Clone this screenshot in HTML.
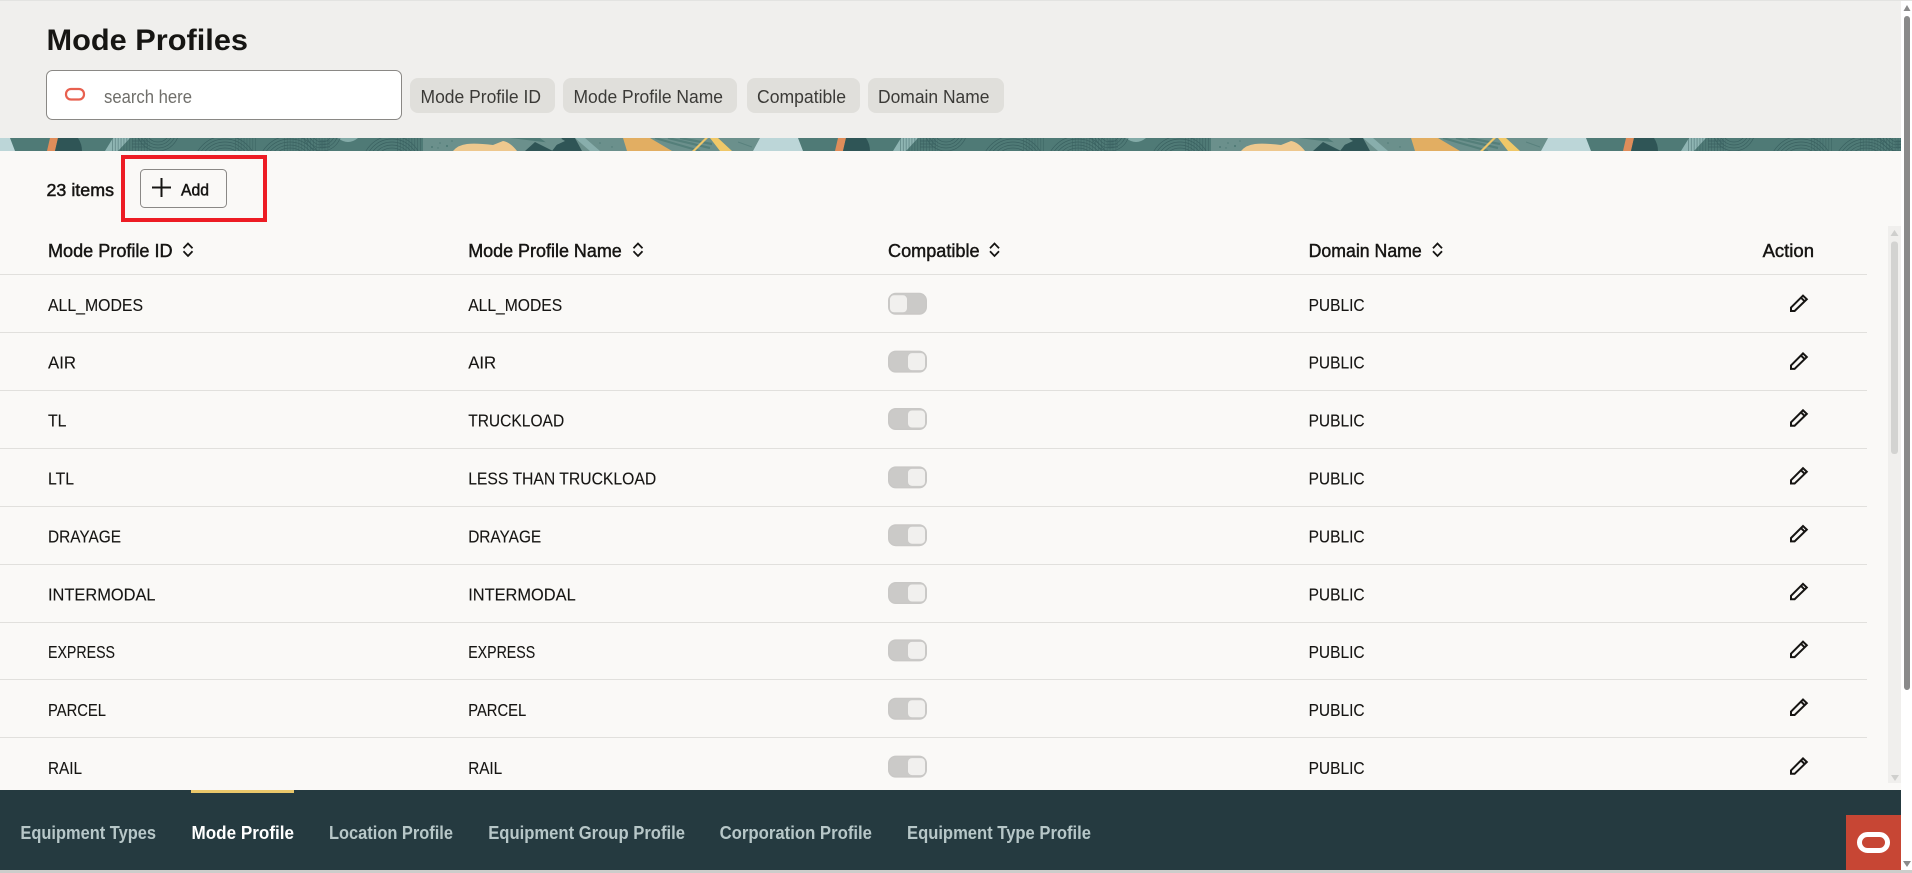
<!DOCTYPE html>
<html lang="en">
<head>
<meta charset="utf-8">
<title>Mode Profiles</title>
<style>
html,body{margin:0;padding:0;width:1912px;height:873px;overflow:hidden;background:#fff}
svg{display:block;position:absolute;left:0;top:0}
text{font-family:"Liberation Sans",sans-serif;white-space:pre}
.th{font-size:18px;fill:#161513;stroke:#161513;stroke-width:.45px}
.td{font-size:17.5px;fill:#161513;stroke:#161513;stroke-width:.12px}
.chip{font-size:18px;fill:#3b3a37}
.tab{font-size:18px;font-weight:700;fill:#b7c7c8}
</style>
</head>
<body>
<svg width="1912" height="873" viewBox="0 0 1912 873" xmlns="http://www.w3.org/2000/svg">
<defs>
<pattern id="bp" x="0" y="138" width="788" height="13" patternUnits="userSpaceOnUse">
  <rect width="788" height="13" fill="#4f7a76"/>
  <rect x="423" width="337" height="13" fill="#6b908c"/>
  <path d="M-28 0H10L15 13H-35ZM760 0H797L800 13H753Z" fill="#bcd6d8"/>
  <path d="M50 0H58L55 13H47Z" fill="#e08d5a"/>
  <path d="M58 0H78Q82 6 82 13H55Z" fill="#2f5556"/>
  <path d="M105 13L113 0H130L118 13Z" fill="#8fb5b3"/>
  <path d="M338 0Q348 8 358 0Z" fill="#84aba8"/>
  <g fill="none" stroke="#2f5556" stroke-width=".7" opacity=".7">
    <path d="M112 6.5H150" stroke-width="13" stroke-dasharray=".7 2.2" opacity=".8"/>
    <path d="M132 3H148M132 6H148M132 9H148"/>
    <circle cx="158" cy="-8" r="12"/><circle cx="158" cy="-8" r="15"/><circle cx="158" cy="-8" r="18"/><circle cx="158" cy="-8" r="21"/>
    <circle cx="225" cy="30" r="20"/><circle cx="225" cy="30" r="23"/><circle cx="225" cy="30" r="26"/><circle cx="225" cy="30" r="29"/><circle cx="225" cy="30" r="32"/>
    <path d="M235 6.5H258" stroke-width="13" stroke-dasharray=".7 2.2" opacity=".7"/>
    <circle cx="290" cy="30" r="20"/><circle cx="290" cy="30" r="23"/><circle cx="290" cy="30" r="26"/><circle cx="290" cy="30" r="29"/><circle cx="290" cy="30" r="32"/>
    <path d="M284 6.5H330" stroke-width="13" stroke-dasharray=".7 2.2" opacity=".7"/>
    <path d="M320 3H330M320 6H330M320 9H330"/>
    <circle cx="322" cy="-6" r="10"/><circle cx="322" cy="-6" r="13"/><circle cx="322" cy="-6" r="16"/><circle cx="322" cy="-6" r="19"/>
    <circle cx="392" cy="28" r="18"/><circle cx="392" cy="28" r="21"/><circle cx="392" cy="28" r="24"/><circle cx="392" cy="28" r="27"/><circle cx="392" cy="28" r="30"/>
    <path d="M397 6.5H423" stroke-width="13" stroke-dasharray=".7 2.2" opacity=".8"/>
  </g>
  <g fill="#4f7a76">
    <circle cx="432" cy="9" r="1"/><circle cx="440" cy="5" r=".8"/><circle cx="447" cy="8" r="1.1"/><circle cx="438" cy="10" r=".7"/><circle cx="452" cy="3" r=".8"/><circle cx="586" cy="8" r=".8"/><circle cx="600" cy="5" r=".8"/><circle cx="612" cy="9" r=".7"/>
    <path d="M510 0H560L552 5L535 3Z"/>
  </g>
  <path d="M453 13Q458 7 467 6T493 7L503 3Q510 4 517 13Z" fill="#eec88e"/>
  <path d="M525 13L535 4L553 13Z" fill="#2f5556"/>
  <path d="M562 0H575L582 13H552Z" fill="#2f5556"/>
  <path d="M575 0H585L600 13H590Z" fill="#88aeac"/>
  <path d="M540 0H560L565 3L552 9Z" fill="#6b908c"/>
  <path d="M623 0H650L672 13H627Z" fill="#e2ae62"/>
  <path d="M655 0L700 13M668 0L710 10M680 0L712 6" stroke="#4f7a76" stroke-width="2.2" fill="none" opacity=".8"/>
  <path d="M705 0H708L695 13H692Z" fill="#eec66a"/>
  <path d="M710 0H718L732 13H720Z" fill="#f0c868"/>
  <path d="M738 4L752 9" stroke="#4f7a76" stroke-width="1" opacity=".7"/>
</pattern>
<g id="tl"><rect x=".75" y=".75" width="37.5" height="20.5" rx="7" fill="#cbcac8" stroke="#c9c8c6" stroke-width="1.5"/><rect x="2" y="2.5" width="17" height="17" rx="4" fill="#f1f0ee"/></g>
<g id="tr"><rect x=".75" y=".75" width="37.5" height="20.5" rx="7" fill="#cbcac8" stroke="#c9c8c6" stroke-width="1.5"/><rect x="20" y="2.5" width="17" height="17" rx="4" fill="#f1f0ee"/></g>
<g id="pen" fill="none" stroke="#161513" stroke-width="2" stroke-linejoin="miter"><path d="M1 13.6L13 1.6L16.8 5.2L4.6 17L1 17Z"/><path d="M11 3.7L14.7 7.3"/></g>
<path id="sort" d="M1 6.2L5.5 1.5L10 6.2M1 9.3L5.5 14L10 9.3" fill="none" stroke="#161513" stroke-width="1.8"/>
</defs>

<!-- page surfaces -->
<rect width="1912" height="873" fill="#fff"/>
<rect width="1901" height="790" fill="#faf9f7"/>
<rect width="1901" height="138" fill="#f0efed"/>
<rect width="1912" height="1" fill="#e3e3e1"/>
<rect y="138" width="1901" height="13" fill="url(#bp)"/>

<!-- header -->
<text x="46.5" y="50" font-size="30" font-weight="700" fill="#161513" textLength="201.5" lengthAdjust="spacingAndGlyphs">Mode Profiles</text>
<rect x="46.5" y="70.5" width="355" height="49" rx="6" fill="#fff" stroke="#8a8885"/>
<rect x="66" y="89" width="18" height="10.5" rx="5" fill="none" stroke="#e8604f" stroke-width="2.2"/>
<text x="104" y="103" font-size="18" fill="#6f6e6a" textLength="88" lengthAdjust="spacingAndGlyphs">search here</text>
<rect x="410" y="78" width="145" height="35" rx="8" fill="#e0dfdb"/>
<rect x="563" y="78" width="174" height="35" rx="8" fill="#e0dfdb"/>
<rect x="747" y="78" width="113" height="35" rx="8" fill="#e0dfdb"/>
<rect x="868" y="78" width="136" height="35" rx="8" fill="#e0dfdb"/>
<text class="chip" x="420.5" y="103" textLength="120.5" lengthAdjust="spacingAndGlyphs">Mode Profile ID</text>
<text class="chip" x="573.5" y="103" textLength="149.5" lengthAdjust="spacingAndGlyphs">Mode Profile Name</text>
<text class="chip" x="757" y="103" textLength="89" lengthAdjust="spacingAndGlyphs">Compatible</text>
<text class="chip" x="878" y="103" textLength="111.5" lengthAdjust="spacingAndGlyphs">Domain Name</text>

<!-- toolbar -->
<text x="46.5" y="196" font-size="17.5" fill="#161513" stroke="#161513" stroke-width=".5" textLength="67.5" lengthAdjust="spacingAndGlyphs">23 items</text>
<rect x="140.5" y="169.5" width="86" height="38" rx="4" fill="#faf9f7" stroke="#8a8886"/>
<path d="M152 187.5H171M161.5 178V197" stroke="#161513" stroke-width="2" fill="none"/>
<text x="181" y="195.5" font-size="16.5" fill="#161513" stroke="#161513" stroke-width=".5" textLength="28" lengthAdjust="spacingAndGlyphs">Add</text>
<rect x="123" y="157" width="142" height="63" fill="none" stroke="#ed1c24" stroke-width="4"/>

<!-- table head -->
<text class="th" x="48" y="257" textLength="124.6" lengthAdjust="spacingAndGlyphs">Mode Profile ID</text>
<use href="#sort" x="182.5" y="242"/>
<text class="th" x="468.2" y="257" textLength="153.6" lengthAdjust="spacingAndGlyphs">Mode Profile Name</text>
<use href="#sort" x="632.5" y="242"/>
<text class="th" x="888" y="257" textLength="91.6" lengthAdjust="spacingAndGlyphs">Compatible</text>
<use href="#sort" x="989" y="242"/>
<text class="th" x="1308.6" y="257" textLength="113.2" lengthAdjust="spacingAndGlyphs">Domain Name</text>
<use href="#sort" x="1432" y="242"/>
<text class="th" x="1762.6" y="257" textLength="51.4" lengthAdjust="spacingAndGlyphs">Action</text>

<!-- row lines -->
<g fill="#e1e0dd">
<rect y="274" width="1867" height="1"/><rect y="332" width="1867" height="1"/><rect y="390" width="1867" height="1"/><rect y="448" width="1867" height="1"/><rect y="506" width="1867" height="1"/><rect y="564" width="1867" height="1"/><rect y="622" width="1867" height="1"/><rect y="679" width="1867" height="1"/><rect y="737" width="1867" height="1"/>
</g>

<!-- rows -->
<g class="rows">
<text class="td" x="48" y="311" textLength="95" lengthAdjust="spacingAndGlyphs">ALL_MODES</text>
<text class="td" x="468.2" y="311" textLength="94" lengthAdjust="spacingAndGlyphs">ALL_MODES</text>
<use href="#tl" x="888" y="292.8"/>
<text class="td" x="1308.6" y="311" textLength="56" lengthAdjust="spacingAndGlyphs">PUBLIC</text>
<use href="#pen" x="1790" y="294"/>

<text class="td" x="48" y="368.5" textLength="28" lengthAdjust="spacingAndGlyphs">AIR</text>
<text class="td" x="468.2" y="368.5" textLength="28" lengthAdjust="spacingAndGlyphs">AIR</text>
<use href="#tr" x="888" y="350.65"/>
<text class="td" x="1308.6" y="368.5" textLength="56" lengthAdjust="spacingAndGlyphs">PUBLIC</text>
<use href="#pen" x="1790" y="351.85"/>

<text class="td" x="48" y="426.4" textLength="18.5" lengthAdjust="spacingAndGlyphs">TL</text>
<text class="td" x="468.2" y="426.4" textLength="96" lengthAdjust="spacingAndGlyphs">TRUCKLOAD</text>
<use href="#tr" x="888" y="408"/>
<text class="td" x="1308.6" y="426.4" textLength="56" lengthAdjust="spacingAndGlyphs">PUBLIC</text>
<use href="#pen" x="1790" y="408.7"/>

<text class="td" x="48" y="484.4" textLength="26" lengthAdjust="spacingAndGlyphs">LTL</text>
<text class="td" x="468.2" y="484.4" textLength="188" lengthAdjust="spacingAndGlyphs">LESS THAN TRUCKLOAD</text>
<use href="#tr" x="888" y="466.35"/>
<text class="td" x="1308.6" y="484.4" textLength="56" lengthAdjust="spacingAndGlyphs">PUBLIC</text>
<use href="#pen" x="1790" y="466.55"/>

<text class="td" x="48" y="542.4" textLength="73" lengthAdjust="spacingAndGlyphs">DRAYAGE</text>
<text class="td" x="468.2" y="542.4" textLength="73" lengthAdjust="spacingAndGlyphs">DRAYAGE</text>
<use href="#tr" x="888" y="524.2"/>
<text class="td" x="1308.6" y="542.4" textLength="56" lengthAdjust="spacingAndGlyphs">PUBLIC</text>
<use href="#pen" x="1790" y="524.4"/>

<text class="td" x="48" y="600.3" textLength="107.5" lengthAdjust="spacingAndGlyphs">INTERMODAL</text>
<text class="td" x="468.2" y="600.3" textLength="107.5" lengthAdjust="spacingAndGlyphs">INTERMODAL</text>
<use href="#tr" x="888" y="582.05"/>
<text class="td" x="1308.6" y="600.3" textLength="56" lengthAdjust="spacingAndGlyphs">PUBLIC</text>
<use href="#pen" x="1790" y="582.25"/>

<text class="td" x="48" y="657.8" textLength="67" lengthAdjust="spacingAndGlyphs">EXPRESS</text>
<text class="td" x="468.2" y="657.8" textLength="67" lengthAdjust="spacingAndGlyphs">EXPRESS</text>
<use href="#tr" x="888" y="639.4"/>
<text class="td" x="1308.6" y="657.8" textLength="56" lengthAdjust="spacingAndGlyphs">PUBLIC</text>
<use href="#pen" x="1790" y="640.1"/>

<text class="td" x="48" y="716" textLength="58" lengthAdjust="spacingAndGlyphs">PARCEL</text>
<text class="td" x="468.2" y="716" textLength="58" lengthAdjust="spacingAndGlyphs">PARCEL</text>
<use href="#tr" x="888" y="697.75"/>
<text class="td" x="1308.6" y="716" textLength="56" lengthAdjust="spacingAndGlyphs">PUBLIC</text>
<use href="#pen" x="1790" y="697.95"/>

<text class="td" x="48" y="774" textLength="34" lengthAdjust="spacingAndGlyphs">RAIL</text>
<text class="td" x="468.2" y="774" textLength="34" lengthAdjust="spacingAndGlyphs">RAIL</text>
<use href="#tr" x="888" y="755.6"/>
<text class="td" x="1308.6" y="774" textLength="56" lengthAdjust="spacingAndGlyphs">PUBLIC</text>
<use href="#pen" x="1790" y="756.8"/>
</g>

<!-- inner scrollbar -->
<rect x="1888" y="226" width="13" height="557" fill="#f0efed"/>
<rect x="1891" y="241.5" width="7" height="212.5" rx="3" fill="#d3d3d1"/>
<path d="M1894.5 230L1898.5 236H1890.5Z" fill="#cfcfcd"/>
<path d="M1891 775H1899L1895 781Z" fill="#cfcfcd"/>

<!-- footer -->
<rect y="790" width="1901" height="80" fill="#253a40"/>
<rect y="870" width="1912" height="3" fill="#cdcdcb"/>
<rect x="191" y="790" width="103" height="3" fill="#eac76a"/>
<text class="tab" x="20.4" y="839" textLength="135.6" lengthAdjust="spacingAndGlyphs">Equipment Types</text>
<text class="tab" x="191.5" y="839" textLength="102.5" lengthAdjust="spacingAndGlyphs" style="fill:#fff">Mode Profile</text>
<text class="tab" x="329" y="839" textLength="124" lengthAdjust="spacingAndGlyphs">Location Profile</text>
<text class="tab" x="488.2" y="839" textLength="196.8" lengthAdjust="spacingAndGlyphs">Equipment Group Profile</text>
<text class="tab" x="719.6" y="839" textLength="152.4" lengthAdjust="spacingAndGlyphs">Corporation Profile</text>
<text class="tab" x="907" y="839" textLength="184" lengthAdjust="spacingAndGlyphs">Equipment Type Profile</text>
<rect x="1846" y="815" width="55" height="55" fill="#c74634"/>
<rect x="1859.5" y="834.5" width="28" height="16" rx="8" fill="none" stroke="#fff" stroke-width="5"/>

<!-- outer scrollbar -->
<rect x="1904" y="16" width="6" height="674" rx="3" fill="#8a8a8a"/>
<path d="M1907 5L1910.5 11H1903.5Z" fill="#8a8a8a"/>
<path d="M1903 861H1911L1907 867Z" fill="#8a8a8a"/>
</svg>
</body>
</html>
